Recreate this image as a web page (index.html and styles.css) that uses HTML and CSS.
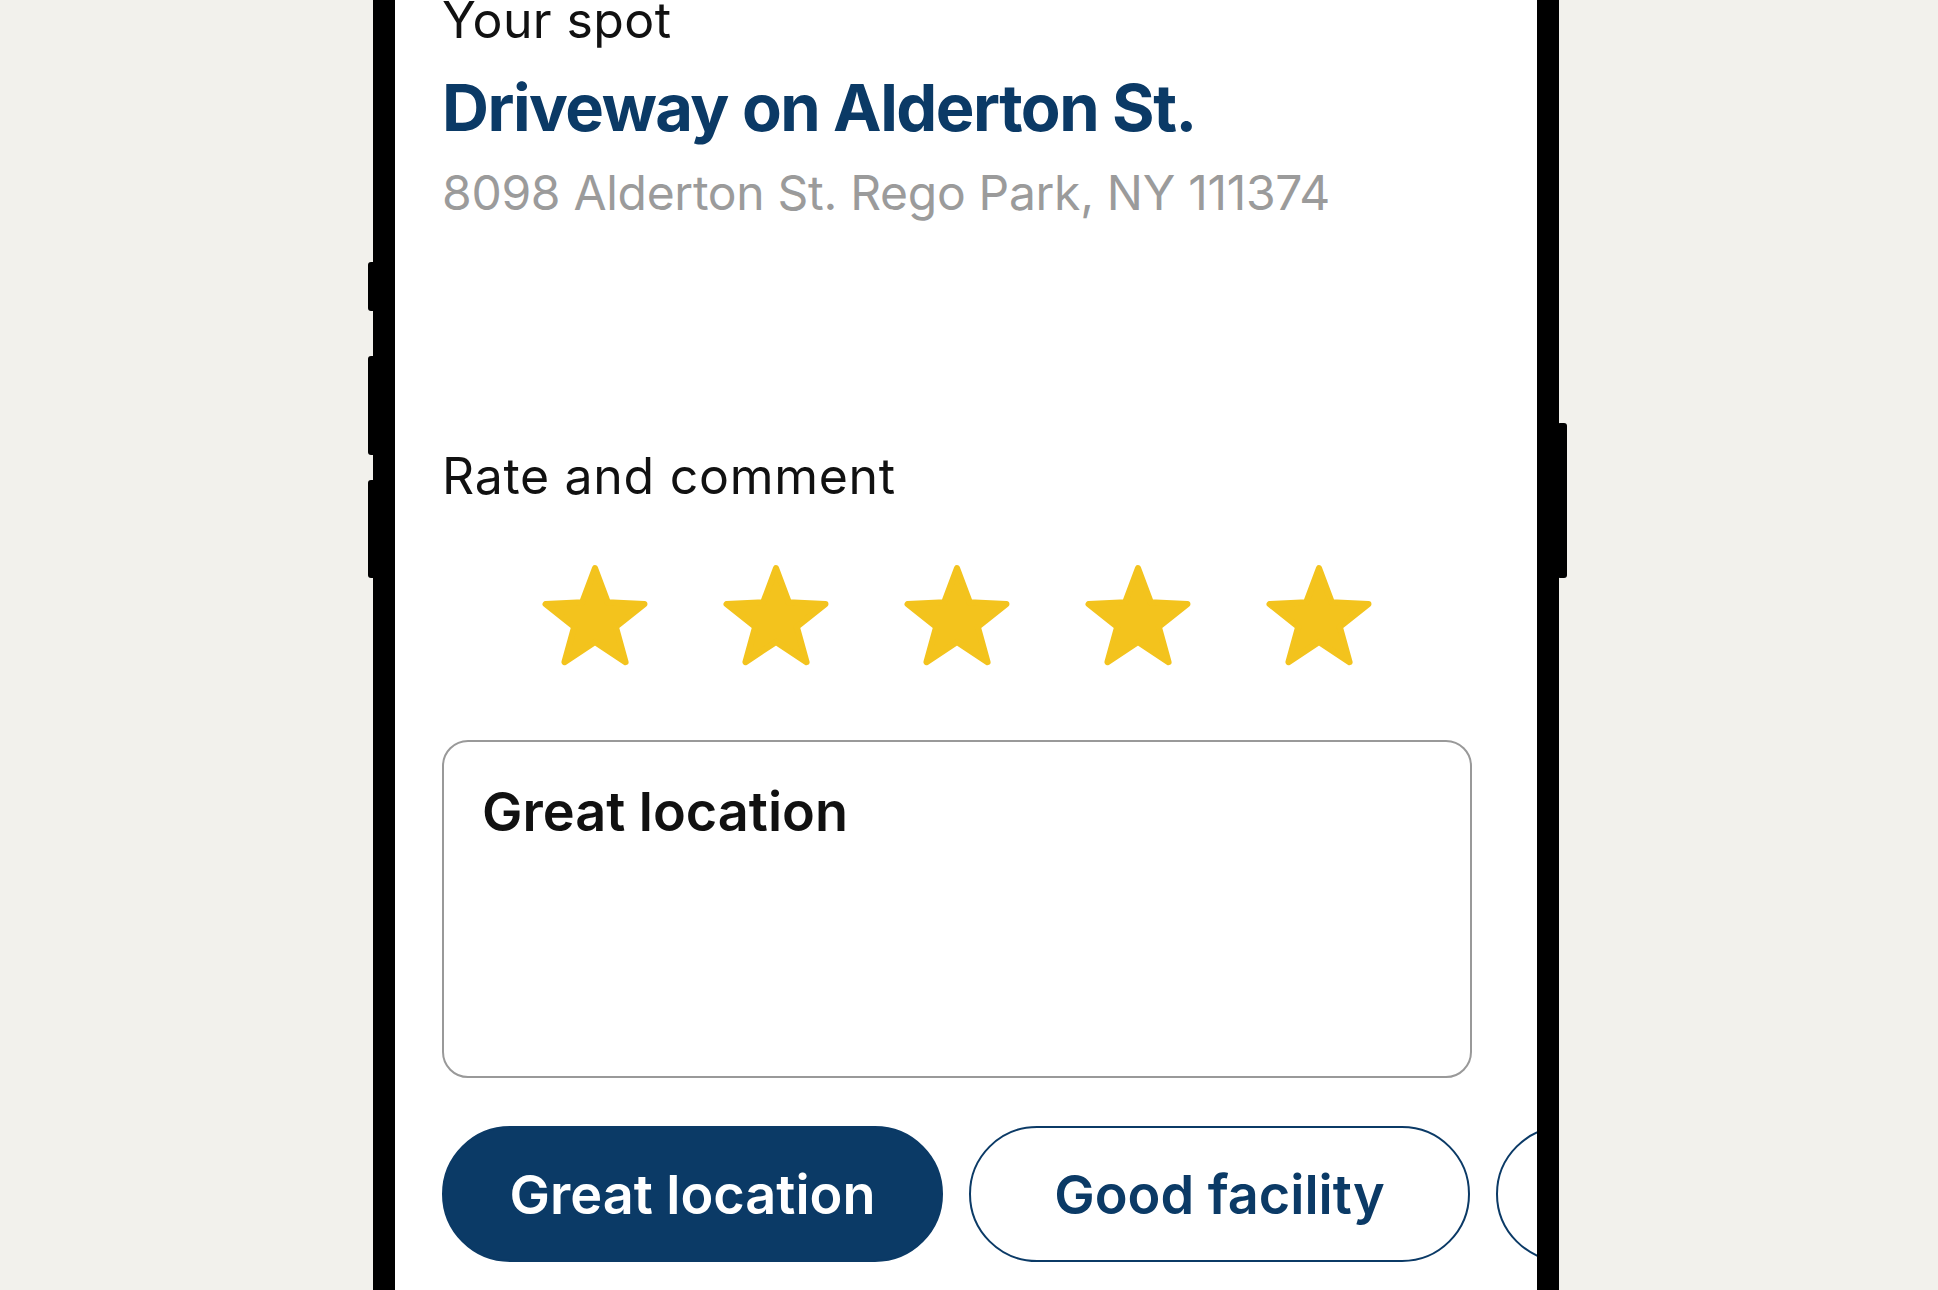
FILE: index.html
```html
<!DOCTYPE html>
<html lang="en">
<head>
  <meta charset="UTF-8" />
  <meta name="viewport" content="width=device-width, initial-scale=1" />
  <title>Rate your spot</title>
  <link rel="stylesheet" href="styles.css">
</head>
<body>
  <div class="phone">
    <span class="side-btn left b1"></span>
    <span class="side-btn left b2"></span>
    <span class="side-btn left b3"></span>
    <span class="side-btn right b4"></span>

    <div class="screen">
      <p class="label">Your spot</p>
      <h1 class="spot-name">Driveway on Alderton St.</h1>
      <p class="address">8098 Alderton St. Rego Park, NY 111374</p>

      <p class="label rate">Rate and comment</p>
      <div class="stars">
        <svg class="star" viewBox="-4 -4 108 104"><polygon points="50,0 62.3,33 97.6,34.6 70,56.5 79.4,90.5 50,71 20.6,90.5 30,56.5 2.4,34.6 37.7,33"/></svg>
        <svg class="star" viewBox="-4 -4 108 104"><polygon points="50,0 62.3,33 97.6,34.6 70,56.5 79.4,90.5 50,71 20.6,90.5 30,56.5 2.4,34.6 37.7,33"/></svg>
        <svg class="star" viewBox="-4 -4 108 104"><polygon points="50,0 62.3,33 97.6,34.6 70,56.5 79.4,90.5 50,71 20.6,90.5 30,56.5 2.4,34.6 37.7,33"/></svg>
        <svg class="star" viewBox="-4 -4 108 104"><polygon points="50,0 62.3,33 97.6,34.6 70,56.5 79.4,90.5 50,71 20.6,90.5 30,56.5 2.4,34.6 37.7,33"/></svg>
        <svg class="star" viewBox="-4 -4 108 104"><polygon points="50,0 62.3,33 97.6,34.6 70,56.5 79.4,90.5 50,71 20.6,90.5 30,56.5 2.4,34.6 37.7,33"/></svg>
      </div>

      <textarea class="comment">Great location</textarea>

      <div class="chips">
        <button class="chip active">Great location</button>
        <button class="chip">Good facility</button>
        <button class="chip">Easy access</button>
      </div>
    </div>
  </div>
</body>
</html>
```

FILE: styles.css
```css
/* Reset */
* {
  margin: 0; padding: 0; box-sizing: border-box;
  font-family: Inter, 'Noto Sans', sans-serif;
}
body {
  background: #f2f1ec;
  height: 100vh;
  overflow: hidden;
  display: flex;
  padding-left: 373px;
}
.phone {
  position: relative;
  width: 1186px;
  height: 2600px;
  margin-top: -200px;
  border: 22px solid #000;
  border-radius: 120px;
  background: #fff;
}
.side-btn {
  position: absolute;
  width: 10px;
  background: #000;
  border-radius: 3px;
}
.side-btn.left { left: -27px; }
.side-btn.right { right: -30px; }
.b1 { top: 440px; height: 49px; }
.b2 { top: 534px; height: 99px; }
.b3 { top: 658px; height: 98px; }
.b4 { top: 601px; height: 155px; }

.screen {
  height: 100%;
  overflow: hidden;
  padding: 168px 65px 0 47px;
  border-radius: 98px;
}
.label {
  font-size: 50px;
  line-height: 60px;
  color: #111;
  letter-spacing: 0.4px;
}
.spot-name {
  margin-top: 18px;
  font-size: 65px;
  line-height: 80px;
  font-weight: 700;
  color: #0b3a66;
  letter-spacing: -1.5px;
}
.address {
  margin-top: 15px;
  font-size: 48px;
  line-height: 60px;
  color: #9b9b9b;
  letter-spacing: -0.3px;
}
.label.rate {
  margin-top: 223px;
  letter-spacing: 0.7px;
}
.stars {
  margin-top: 58px;
  display: flex;
  justify-content: center;
  gap: 69px;
}
.star {
  width: 112px;
  height: 108px;
  fill: #f3c31d;
  stroke: #f3c31d;
  stroke-width: 6;
  stroke-linejoin: round;
}
.comment {
  display: block;
  margin-top: 68px;
  width: 1030px;
  height: 338px;
  padding: 37px 38px;
  border: 2px solid #999;
  border-radius: 26px;
  font-size: 54px;
  line-height: 65px;
  font-weight: 600;
  color: #111;
  resize: none;
  outline: none;
  overflow: hidden;
}
.chips {
  margin-top: 48px;
  display: flex;
  gap: 26px;
}
.chip {
  flex-shrink: 0;
  width: 501px;
  height: 136px;
  border-radius: 68px;
  border: 2px solid #0b3a66;
  background: #fff;
  color: #0b3a66;
  font-size: 54px;
  font-weight: 600;
  cursor: pointer;
}
.chip.active {
  background: #0b3a66;
  color: #fff;
}
```
